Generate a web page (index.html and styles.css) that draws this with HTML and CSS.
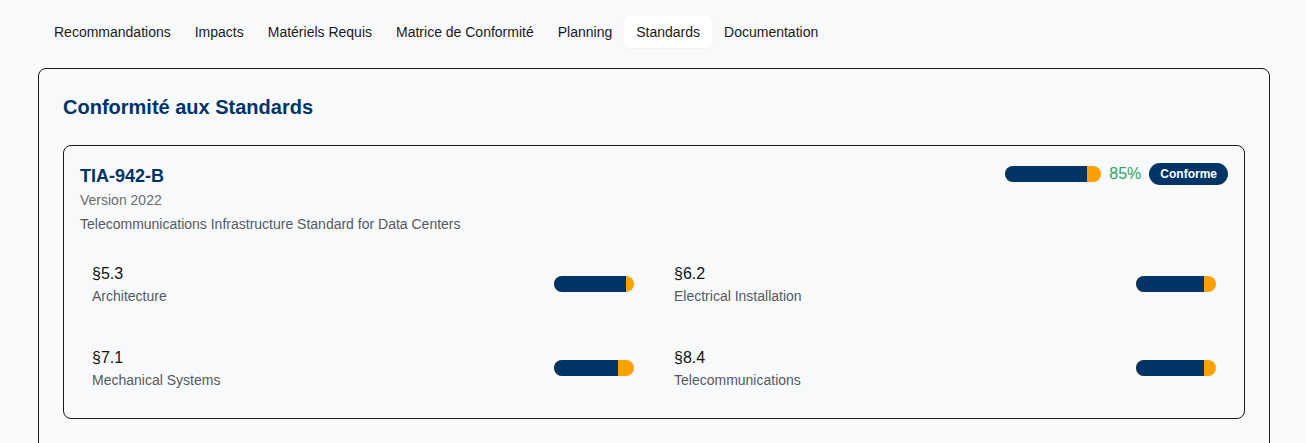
FILE: index.html
```html
<!DOCTYPE html>
<html lang="fr">
<head>
<meta charset="utf-8">
<title>Standards</title>
<link rel="stylesheet" href="styles.css">
</head>
<body>
<div class="page">
  <nav class="tabs">
    <span class="tab">Recommandations</span>
    <span class="tab">Impacts</span>
    <span class="tab">Matériels Requis</span>
    <span class="tab">Matrice de Conformité</span>
    <span class="tab">Planning</span>
    <span class="tab active">Standards</span>
    <span class="tab">Documentation</span>
  </nav>
  <section class="card">
    <h2 class="card-title">Conformité aux Standards</h2>
    <div class="std">
      <div class="std-head">
        <div class="std-info">
          <h3 class="std-name">TIA-942-B</h3>
          <div class="std-version">Version 2022</div>
          <div class="std-desc">Telecommunications Infrastructure Standard for Data Centers</div>
        </div>
        <div class="std-status">
          <div class="bar bar-lg"><div class="fill" style="width:85%"></div></div>
          <span class="pct">85%</span>
          <span class="badge">Conforme</span>
        </div>
      </div>
      <div class="clauses">
        <div class="clause">
          <div><div class="code">§5.3</div><div class="label">Architecture</div></div>
          <div class="bar bar-sm"><div class="fill" style="width:90%"></div></div>
        </div>
        <div class="clause">
          <div><div class="code">§6.2</div><div class="label">Electrical Installation</div></div>
          <div class="bar bar-sm"><div class="fill" style="width:85%"></div></div>
        </div>
        <div class="clause">
          <div><div class="code">§7.1</div><div class="label">Mechanical Systems</div></div>
          <div class="bar bar-sm"><div class="fill" style="width:80%"></div></div>
        </div>
        <div class="clause">
          <div><div class="code">§8.4</div><div class="label">Telecommunications</div></div>
          <div class="bar bar-sm"><div class="fill" style="width:85%"></div></div>
        </div>
      </div>
    </div>
  </section>
</div>
</body>
</html>
```

FILE: styles.css
```css
* { box-sizing: border-box; }
html, body { margin: 0; padding: 0; }
body {
  background: #f8f9fb;
  font-family: "Liberation Sans", Arial, sans-serif;
  color: #1a1a1a;
}
.page {
  padding: 12px 36px 0 38px;
}
.tabs {
  display: inline-flex;
  padding: 4px;
}
.tab {
  padding: 8px 12px;
  font-size: 14px;
  line-height: 16px;
  color: #1a1a1a;
  border-radius: 5px;
}
.tab.active {
  background: #ffffff;
  box-shadow: 0 1px 2px rgba(0,0,0,0.04);
}
.card {
  margin-top: 16px;
  border: 1px solid #1a1a1a;
  border-radius: 8px;
  padding: 24px 24px 40px;
}
.card-title {
  margin: 0 0 24px;
  font-size: 20px;
  line-height: 28px;
  font-weight: 700;
  color: #003366;
}
.std {
  border: 1px solid #1a1a1a;
  border-radius: 8px;
  padding: 16px;
}
.std-head {
  display: flex;
  justify-content: space-between;
  align-items: flex-start;
}
.std-name {
  margin: 0;
  font-size: 18px;
  line-height: 28px;
  font-weight: 700;
  color: #003366;
}
.std-version {
  font-size: 14px;
  line-height: 20px;
  color: #6b6b6b;
}
.std-desc {
  margin-top: 4px;
  font-size: 14px;
  line-height: 20px;
  color: #555a60;
}
.std-status {
  display: flex;
  align-items: center;
  gap: 8px;
  padding-top: 1px;
}
.bar {
  height: 16px;
  border-radius: 8px;
  background: #ffa000;
  overflow: hidden;
}
.bar-lg { width: 96px; }
.bar-sm { width: 80px; }
.fill {
  height: 100%;
  background: #003366;
}
.pct {
  font-size: 16px;
  line-height: 20px;
  color: #2ea35a;
}
.badge {
  background: #003366;
  color: #ffffff;
  font-size: 12px;
  font-weight: 700;
  line-height: 16px;
  padding: 3px 11px;
  border-radius: 11px;
}
.clauses {
  margin-top: 16px;
  display: grid;
  grid-template-columns: 1fr 1fr;
  gap: 16px;
}
.clause {
  display: flex;
  justify-content: space-between;
  align-items: center;
  padding: 12px;
}
.code {
  font-size: 16px;
  line-height: 24px;
  color: #111111;
}
.label {
  font-size: 14px;
  line-height: 20px;
  color: #555a60;
}
```
